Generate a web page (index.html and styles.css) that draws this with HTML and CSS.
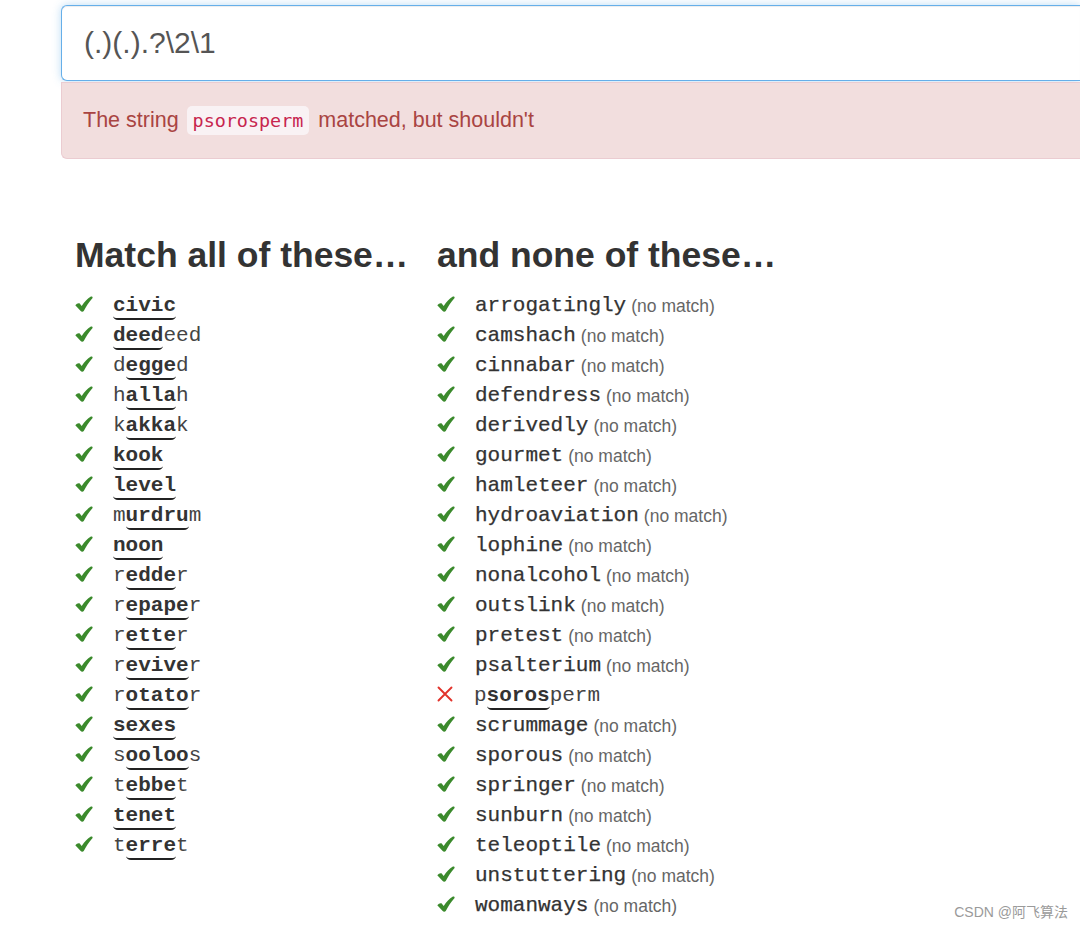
FILE: index.html
```html
<!DOCTYPE html>
<html>
<head>
<meta charset="utf-8">
<link rel="stylesheet" href="styles.css">
</head>
<body>
<svg width="0" height="0" class="defs">
  <defs>
    <symbol id="chk" viewBox="0 0 18 16">
      <path d="M0.3 9.2 C1.6 7.5 3.2 6.8 4.5 7.3 L6.7 10.1 C9.4 6 12.4 2.8 15.9 0.6 C17 0 18.2 1.2 17.4 2.2 C13.9 6.1 11.2 10.3 8.9 14.8 C8.2 16 6.5 16.1 5.7 15 Z" fill="currentColor"/>
    </symbol>
    <symbol id="crs" viewBox="0 0 16 16">
      <path d="M1.5 1.5 L14.5 14.5 M14.5 1.5 L1.5 14.5" stroke="currentColor" stroke-width="1.9" fill="none" stroke-linecap="round"/>
    </symbol>
  </defs>
</svg>
<div class="page">
  <div class="top">
    <div class="regex-input">(.)(.).?\2\1</div>
    <div class="alert">The string <code>psorosperm</code> matched, but shouldn't</div>
  </div>
  <div class="cols">
    <div class="col">
      <h2>Match all of these…</h2>
      <ul class="list">
        <li><svg class="ok"><use href="#chk"/></svg><span class="w"><b>civic</b></span></li>
        <li><svg class="ok"><use href="#chk"/></svg><span class="w"><b>deed</b>eed</span></li>
        <li><svg class="ok"><use href="#chk"/></svg><span class="w">d<b>egge</b>d</span></li>
        <li><svg class="ok"><use href="#chk"/></svg><span class="w">h<b>alla</b>h</span></li>
        <li><svg class="ok"><use href="#chk"/></svg><span class="w">k<b>akka</b>k</span></li>
        <li><svg class="ok"><use href="#chk"/></svg><span class="w"><b>kook</b></span></li>
        <li><svg class="ok"><use href="#chk"/></svg><span class="w"><b>level</b></span></li>
        <li><svg class="ok"><use href="#chk"/></svg><span class="w">m<b>urdru</b>m</span></li>
        <li><svg class="ok"><use href="#chk"/></svg><span class="w"><b>noon</b></span></li>
        <li><svg class="ok"><use href="#chk"/></svg><span class="w">r<b>edde</b>r</span></li>
        <li><svg class="ok"><use href="#chk"/></svg><span class="w">r<b>epape</b>r</span></li>
        <li><svg class="ok"><use href="#chk"/></svg><span class="w">r<b>ette</b>r</span></li>
        <li><svg class="ok"><use href="#chk"/></svg><span class="w">r<b>evive</b>r</span></li>
        <li><svg class="ok"><use href="#chk"/></svg><span class="w">r<b>otato</b>r</span></li>
        <li><svg class="ok"><use href="#chk"/></svg><span class="w"><b>sexes</b></span></li>
        <li><svg class="ok"><use href="#chk"/></svg><span class="w">s<b>ooloo</b>s</span></li>
        <li><svg class="ok"><use href="#chk"/></svg><span class="w">t<b>ebbe</b>t</span></li>
        <li><svg class="ok"><use href="#chk"/></svg><span class="w"><b>tenet</b></span></li>
        <li><svg class="ok"><use href="#chk"/></svg><span class="w">t<b>erre</b>t</span></li>
      </ul>
    </div>
    <div class="col">
      <h2>and none of these…</h2>
      <ul class="list">
        <li><svg class="ok"><use href="#chk"/></svg><span class="w nm">arrogatingly</span><span class="note">(no match)</span></li>
        <li><svg class="ok"><use href="#chk"/></svg><span class="w nm">camshach</span><span class="note">(no match)</span></li>
        <li><svg class="ok"><use href="#chk"/></svg><span class="w nm">cinnabar</span><span class="note">(no match)</span></li>
        <li><svg class="ok"><use href="#chk"/></svg><span class="w nm">defendress</span><span class="note">(no match)</span></li>
        <li><svg class="ok"><use href="#chk"/></svg><span class="w nm">derivedly</span><span class="note">(no match)</span></li>
        <li><svg class="ok"><use href="#chk"/></svg><span class="w nm">gourmet</span><span class="note">(no match)</span></li>
        <li><svg class="ok"><use href="#chk"/></svg><span class="w nm">hamleteer</span><span class="note">(no match)</span></li>
        <li><svg class="ok"><use href="#chk"/></svg><span class="w nm">hydroaviation</span><span class="note">(no match)</span></li>
        <li><svg class="ok"><use href="#chk"/></svg><span class="w nm">lophine</span><span class="note">(no match)</span></li>
        <li><svg class="ok"><use href="#chk"/></svg><span class="w nm">nonalcohol</span><span class="note">(no match)</span></li>
        <li><svg class="ok"><use href="#chk"/></svg><span class="w nm">outslink</span><span class="note">(no match)</span></li>
        <li><svg class="ok"><use href="#chk"/></svg><span class="w nm">pretest</span><span class="note">(no match)</span></li>
        <li><svg class="ok"><use href="#chk"/></svg><span class="w nm">psalterium</span><span class="note">(no match)</span></li>
        <li><svg class="bad"><use href="#crs"/></svg><span class="w">p<b>soros</b>perm</span></li>
        <li><svg class="ok"><use href="#chk"/></svg><span class="w nm">scrummage</span><span class="note">(no match)</span></li>
        <li><svg class="ok"><use href="#chk"/></svg><span class="w nm">sporous</span><span class="note">(no match)</span></li>
        <li><svg class="ok"><use href="#chk"/></svg><span class="w nm">springer</span><span class="note">(no match)</span></li>
        <li><svg class="ok"><use href="#chk"/></svg><span class="w nm">sunburn</span><span class="note">(no match)</span></li>
        <li><svg class="ok"><use href="#chk"/></svg><span class="w nm">teleoptile</span><span class="note">(no match)</span></li>
        <li><svg class="ok"><use href="#chk"/></svg><span class="w nm">unstuttering</span><span class="note">(no match)</span></li>
        <li><svg class="ok"><use href="#chk"/></svg><span class="w nm">womanways</span><span class="note">(no match)</span></li>
      </ul>
    </div>
  </div>
</div>
<div class="watermark">CSDN @阿飞算法</div>
</body>
</html>
```

FILE: styles.css
```css
html, body {
  margin: 0;
  padding: 0;
  background: #fff;
  overflow: hidden;
}
body {
  font-family: "Liberation Sans", Arial, sans-serif;
  color: #333;
  width: 1080px;
  height: 927px;
  position: relative;
}
.defs {
  position: absolute;
  width: 0;
  height: 0;
}
.page {
  padding-top: 5px;
  margin-left: 61px;
}
.top {
  width: 1019px;
}
.regex-input {
  box-sizing: border-box;
  height: 76px;
  border: 1px solid #66afe9;
  border-right: none;
  border-radius: 6px 0 0 6px;
  box-shadow: inset 0 1px 1px rgba(0,0,0,.075), 0 0 8px rgba(102,175,233,.45);
  padding: 0 22px;
  font-size: 30px;
  line-height: 74px;
  color: #555;
  background: #fff;
}
.alert {
  box-sizing: border-box;
  height: 77px;
  margin-top: 1px;
  background: #f2dede;
  border: 1px solid #ebccd1;
  border-right: none;
  border-radius: 0 0 0 6px;
  color: #a94442;
  font-size: 21.5px;
  line-height: 75px;
  padding: 0 21px;
}
.alert code {
  font-family: "DejaVu Sans Mono", "Liberation Mono", monospace;
  font-size: 18.4px;
  color: #c7254e;
  background: #f9f2f4;
  border-radius: 5px;
  padding: 4px 6px;
  margin: 0 3px 0 2px;
}
.cols {
  display: grid;
  grid-template-columns: 362px auto;
  margin-top: 77px;
  padding-left: 14px;
}
h2 {
  margin: 0;
  font-size: 35.5px;
  line-height: 38px;
  font-weight: bold;
  color: #333;
}
.list {
  list-style: none;
  margin: 15px 0 0;
  padding: 0;
}
.list li {
  height: 30px;
  display: flex;
  align-items: center;
  white-space: nowrap;
}
.ok, .bad {
  flex: none;
  display: block;
}
.ok {
  width: 18px;
  height: 16px;
  margin-right: 20px;
  color: #3b8a2c;
}
.bad {
  width: 16px;
  height: 16px;
  margin-right: 21px;
  color: #e2332b;
}
.w {
  font-family: "Liberation Mono", "Courier New", monospace;
  font-size: 21px;
  line-height: 30px;
  margin-top: 4px;
  color: #444;
}
.w.nm {
  color: #333;
  -webkit-text-stroke: 0.25px #333;
}
.w b {
  font-weight: bold;
  color: #333;
  border-bottom: 2px solid #222;
  border-radius: 0 0 5px 5px / 0 0 4px 4px;
  padding-bottom: 1px;
}
.note {
  font-size: 17.5px;
  line-height: 30px;
  color: #666;
  margin-left: 5px;
  margin-top: 3px;
}
.watermark {
  position: absolute;
  right: 12px;
  bottom: 6px;
  font-family: "Liberation Sans", "Noto Sans CJK SC", sans-serif;
  font-size: 14px;
  color: #9a9a9a;
}
```
